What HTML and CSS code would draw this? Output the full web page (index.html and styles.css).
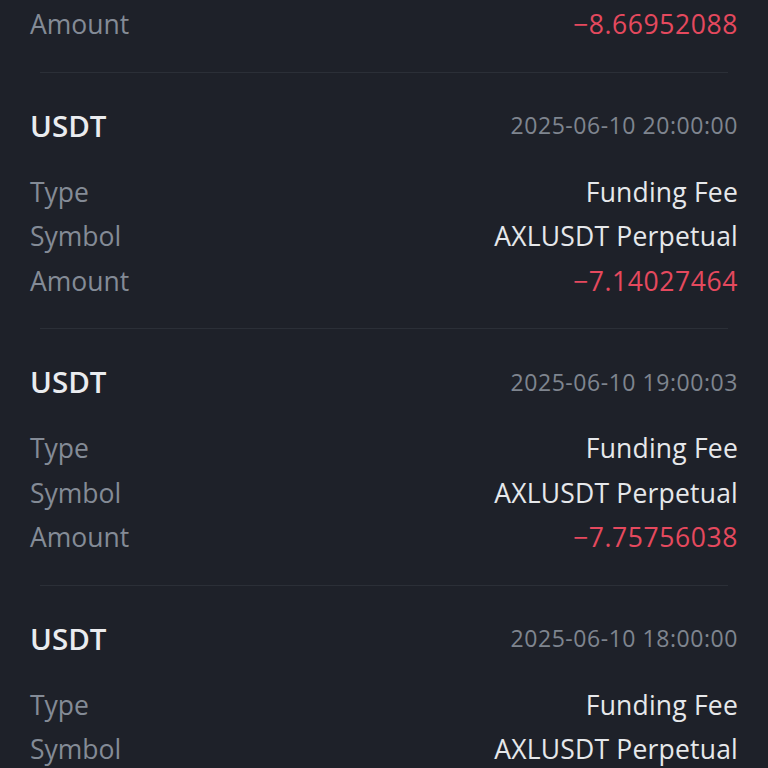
FILE: index.html
```html
<!DOCTYPE html>
<html lang="en">
<head>
<meta charset="utf-8">
<title>Funding Fee History</title>
<link rel="stylesheet" href="styles.css">
</head>
<body>
<main class="list">
  <section class="card card-partial">
    <div class="row"><span class="label">Amount</span><span class="value neg">−8.66952088</span></div>
  </section>
  <section class="card">
    <div class="head"><span class="asset">USDT</span><span class="time">2025-06-10 20:00:00</span></div>
    <div class="row"><span class="label">Type</span><span class="value">Funding Fee</span></div>
    <div class="row"><span class="label">Symbol</span><span class="value">AXLUSDT Perpetual</span></div>
    <div class="row"><span class="label">Amount</span><span class="value neg">−7.14027464</span></div>
  </section>
  <section class="card">
    <div class="head"><span class="asset">USDT</span><span class="time">2025-06-10 19:00:03</span></div>
    <div class="row"><span class="label">Type</span><span class="value">Funding Fee</span></div>
    <div class="row"><span class="label">Symbol</span><span class="value">AXLUSDT Perpetual</span></div>
    <div class="row"><span class="label">Amount</span><span class="value neg">−7.75756038</span></div>
  </section>
  <section class="card">
    <div class="head"><span class="asset">USDT</span><span class="time">2025-06-10 18:00:00</span></div>
    <div class="row"><span class="label">Type</span><span class="value">Funding Fee</span></div>
    <div class="row"><span class="label">Symbol</span><span class="value">AXLUSDT Perpetual</span></div>
  </section>
</main>
</body>
</html>
```
FILE: styles.css
```css
html, body {
  margin: 0;
  padding: 0;
  background: #1e2129;
  overflow: hidden;
}
body {
  width: 768px;
  height: 768px;
  font-family: "Open Sans", Lato, sans-serif;
}
.list {
  padding: 0 30px;
}
.card {
  position: relative;
  padding: 32.5px 0 25px;
}
.card + .card::before {
  content: "";
  position: absolute;
  top: 0;
  left: 10px;
  right: 10px;
  height: 1px;
  background: #2b2f37;
}
.card-partial {
  padding-top: 2px;
}
.head {
  display: flex;
  justify-content: space-between;
  align-items: center;
  height: 42px;
  margin-bottom: 23.5px;
}
.asset {
  font-size: 29.5px;
  font-weight: 600;
  color: #eaecef;
}
.time {
  font-size: 23px;
  letter-spacing: 0.55px;
  color: #7f858f;
}
.row {
  display: flex;
  justify-content: space-between;
  align-items: center;
  height: 44.5px;
  font-size: 26.5px;
}
.label {
  color: #848b96;
}
.value {
  color: #e6e8eb;
  letter-spacing: 0.2px;
}
.neg {
  color: #e5495e;
  letter-spacing: 0.6px;
}
```
